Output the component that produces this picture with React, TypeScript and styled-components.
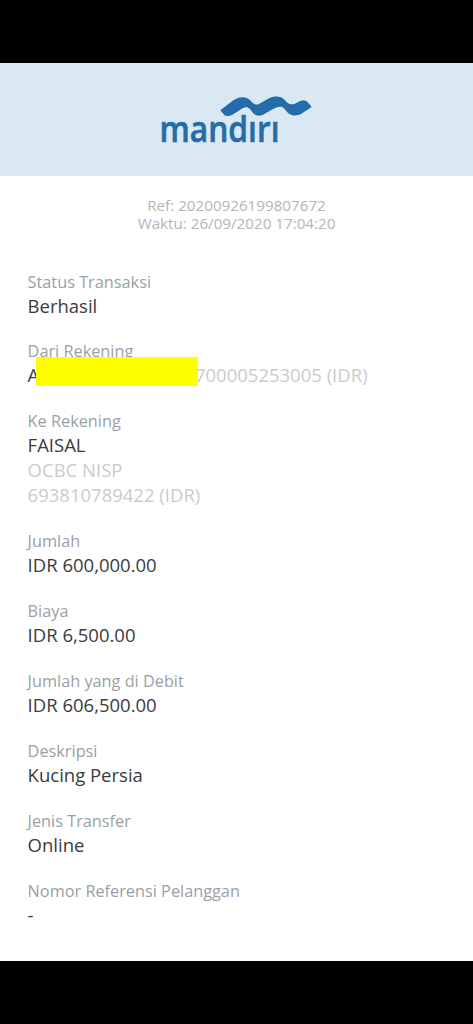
import React from "react";
import styled, { createGlobalStyle } from "styled-components";

const GlobalStyle = createGlobalStyle`
  * { box-sizing: border-box; }
  body {
    margin: 0;
    background: #000;
    font-family: "Open Sans", "Noto Sans", sans-serif;
  }
`;

const Screen = styled.div`
  height: 1024px;
  padding: 63px 0;
  background: #000;
`;

const Receipt = styled.main`
  height: 898px;
  background: #fff;
`;

const Header = styled.header`
  display: flex;
  justify-content: center;
  height: 113px;
  padding-top: 22px;
  background: #dae8f3;
`;

const Reference = styled.div`
  padding-top: 20px;
  text-align: center;
  font-size: 15.2px;
  line-height: 18px;
  color: #b5b5b5;
`;

const Details = styled.dl`
  display: flex;
  flex-direction: column;
  gap: 22.9px;
  margin: 0;
  padding: 38.5px 27.6px 0;
`;

const Row = styled.div`
  display: flex;
  flex-direction: column;
`;

const Label = styled.dt`
  font-size: 16.3px;
  line-height: 22px;
  color: #9a9fa6;
`;

const Value = styled.dd<{ $muted?: boolean }>`
  position: relative;
  margin: 0;
  font-size: 18.5px;
  line-height: 25px;
  white-space: nowrap;
  color: ${(p) => (p.$muted ? "#cbcbcb" : "#3b3b3d")};
`;

const AccountLine = styled.span`
  display: flex;
  justify-content: space-between;
  width: 340px;
`;

const AccountNumber = styled.span`
  color: #cbcbcb;
`;

const Redaction = styled.span`
  position: absolute;
  left: 8.4px;
  top: -5.4px;
  width: 162px;
  height: 28.5px;
  background: #ffff00;
`;

const Logo = () => (
  <svg width="173" height="70" viewBox="0 0 173 70" role="img" aria-label="mandiri">
    <text
      x="9.5"
      y="56.7"
      fill="#256caa"
      stroke="#256caa"
      strokeWidth="0.6"
      fontSize="36"
      fontWeight="600"
      textLength="120"
      lengthAdjust="spacingAndGlyphs"
    >
      mandırı
    </text>
    <path
      d="M70.300 25.300 L83 15.500 C88 12 94 11 98.300 13.700 C101 15.500 103 19 106 19.500 C108 19.700 109 19 111 17.700 L119 13.200 C124 11 130 11 133.300 13.700 C136 15.500 137 18.700 141 19.300 C146 19.800 149 15.300 153.300 15.200 C157 15.200 158.500 18 161.700 22 L151 29 C147 31 142 31 139 28.700 C136 26.500 135 23.500 132 22 C129 21 126 22.200 123 24 L113 29.700 C110 31.300 105.500 31 103 28 C101 25.500 100 23 97 22.200 C94 21.800 92 23.500 90 25 L82 30 C79 31.300 76 31.300 74.500 30.300 Z"
      fill="#256caa"
    />
  </svg>
);

const transfer = [
  { label: "Jumlah", value: "IDR 600,000.00" },
  { label: "Biaya", value: "IDR 6,500.00" },
  { label: "Jumlah yang di Debit", value: "IDR 606,500.00" },
  { label: "Deskripsi", value: "Kucing Persia" },
  { label: "Jenis Transfer", value: "Online" },
  { label: "Nomor Referensi Pelanggan", value: "-" },
];

export default function App() {
  return (
    <>
      <GlobalStyle />
      <Screen>
        <Receipt>
          <Header>
            <Logo />
          </Header>
          <Reference>
            <div>Ref: 20200926199807672</div>
            <div>Waktu: 26/09/2020 17:04:20</div>
          </Reference>
          <Details>
            <Row>
              <Label>Status Transaksi</Label>
              <Value>Berhasil</Value>
            </Row>
            <Row>
              <Label>Dari Rekening</Label>
              <Value>
                <AccountLine>
                  <span>A</span>
                  <AccountNumber>700005253005 (IDR)</AccountNumber>
                </AccountLine>
                <Redaction />
              </Value>
            </Row>
            <Row>
              <Label>Ke Rekening</Label>
              <Value>FAISAL</Value>
              <Value $muted>OCBC NISP</Value>
              <Value $muted>693810789422 (IDR)</Value>
            </Row>
            {transfer.map((item) => (
              <Row key={item.label}>
                <Label>{item.label}</Label>
                <Value>{item.value}</Value>
              </Row>
            ))}
          </Details>
        </Receipt>
      </Screen>
    </>
  );
}
